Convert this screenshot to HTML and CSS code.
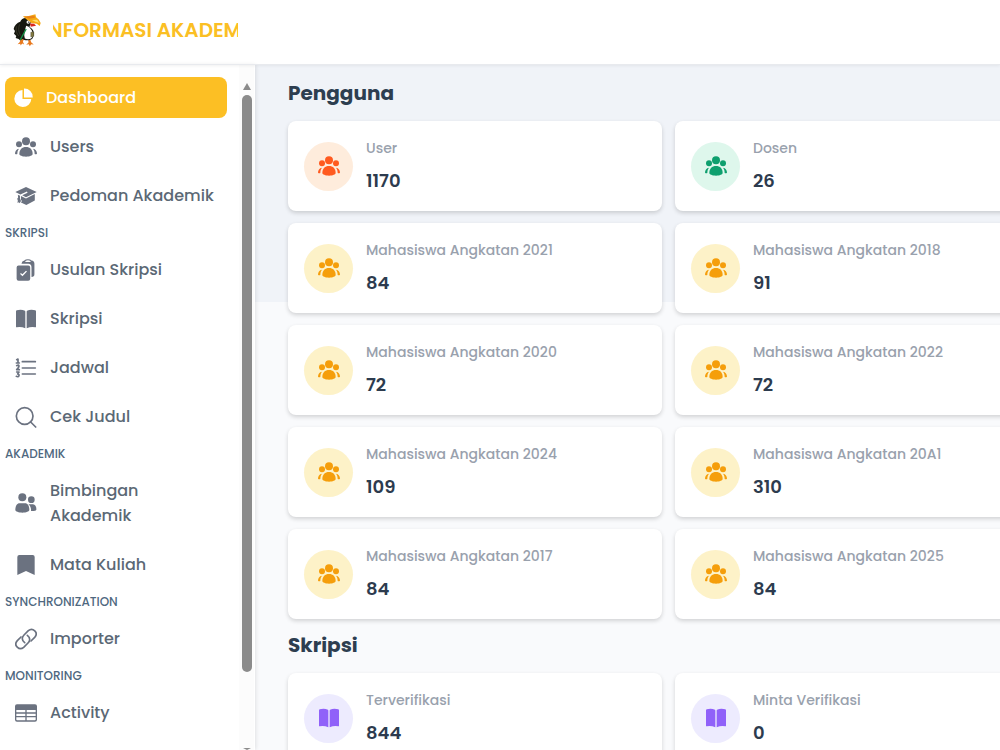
FILE: index.html
```html
<!DOCTYPE html>
<html lang="id">
<head>
    <meta charset="UTF-8">
    <meta name="viewport" content="width=device-width, initial-scale=1.0">
    <title>Informasi Akademik</title>
    <link rel="stylesheet" href="styles.css">
</head>
<body>

    <!-- Shared icons -->
    <svg class="sprite" aria-hidden="true">
        <symbol id="icon-group" viewBox="0 0 66 60">
            <circle cx="33" cy="13" r="12"/>
            <circle cx="12" cy="22" r="9"/>
            <circle cx="54" cy="22" r="9"/>
            <path d="M13 51C13 38 21 30 33 30S53 38 53 51C53 55 44 59 33 59S13 55 13 51Z"/>
            <path d="M0 50C0 42 4 36 12 35C8 40 7 45 7 51C4 52 2 52 0 50Z"/>
            <path d="M66 50C66 42 62 36 54 35C58 40 59 45 59 51C62 52 64 52 66 50Z"/>
        </symbol>
        <symbol id="icon-book" viewBox="0 0 66 60">
            <path d="M3 7Q3 5 5 4Q18 0 30 5Q31 6 31 8V58Q18 52 5 55Q3 55 3 53Z"/>
            <path d="M63 7Q63 5 61 4Q48 0 36 5Q35 6 35 8V58Q48 52 61 55Q63 55 63 53Z"/>
        </symbol>
    </svg>

    <header class="topbar">
        <svg class="logo" viewBox="40 38 88 102" role="img" aria-label="Logo">
            <path fill="#e8781c" d="M64 116L60 126L54 132L62 131L63 136L68 130L74 133L70 125L73 117ZM86 116L87 127L80 134L88 132L91 138L95 132L103 133L95 126L92 116Z"/>
            <path fill="#16170f" d="M62 64C65 54 76 50 86 54L94 66L90 80C104 86 108 104 98 116C90 121 76 122 68 116L62 121L57 116L48 113L50 107L43 100L46 92L42 86C44 76 52 67 62 64Z"/>
            <path fill="#fff" d="M80 76C90 78 100 90 101 104C99 116 88 120 76 115C72 104 75 92 80 76Z"/>
            <path fill="none" stroke="#4b4a37" stroke-width="2" d="M51 78C47 88 51 100 58 107M60 72C55 86 58 99 64 106"/>
            <path fill="none" stroke="#159447" stroke-width="4" d="M80 86L62 119"/>
            <path fill="#847b43" stroke="#333020" stroke-width="1" d="M94 96L103 95L103 108L94 110Z"/>
            <path fill="#f5a914" d="M70 47L82 48L108 41L110 50L118 57L124 68L121 77L112 70L96 68L86 61Z"/>
            <path fill="#e98317" d="M72 48L105 46L107 52L88 55Z"/>
            <path fill="#ffe067" d="M97 59L113 58L120 68L108 64Z"/>
            <path fill="#d92920" d="M91 69L104 70L110 76L94 79Z"/>
            <circle cx="86" cy="65" r="5" fill="#fff"/>
            <circle cx="87" cy="65" r="2" fill="#111"/>
        </svg>
        <div class="brand"><span>INFORMASI AKADEMIK</span></div>
    </header>

    <div class="layout">
        <aside class="sidebar">
            <nav class="menu">
                <a class="menu-item active" href="#">
                    <svg class="icon" viewBox="0 0 66 66"><path d="M28 7V36H57A28 28 0 1 1 28 7Z"/><path d="M33 2A28 28 0 0 1 62 31H33Z"/></svg>
                    <span>Dashboard</span>
                </a>
                <a class="menu-item" href="#">
                    <svg class="icon"><use href="#icon-group"/></svg>
                    <span>Users</span>
                </a>
                <a class="menu-item" href="#">
                    <svg class="icon" viewBox="0 0 70 62">
                        <path d="M35 2L69 18L35 35L23 29L40 21L38 17L17 26L1 18Z"/>
                        <path d="M19 31L35 39L63 25V45L36 60L19 52L22 47L19 43Z"/>
                        <path d="M9 27L16 30V39L19 47L15 54L12 51L8 53L9 45L7 40L10 36Z"/>
                    </svg>
                    <span>Pedoman Akademik</span>
                </a>

                <h2 class="menu-label">SKRIPSI</h2>
                <a class="menu-item" href="#">
                    <svg class="icon" viewBox="0 0 66 68">
                        <path fill-rule="evenodd" d="M10 20H40Q46 20 46 26V61Q46 67 40 67H10Q4 67 4 61V26Q4 20 10 20ZM17 43L15 46L22 53L36 39L33 36L22 47Z"/>
                        <path d="M19 15Q20 6 28 5Q31 1 39 1Q47 1 50 5Q59 6 59 15V47Q59 55 50 56V26Q50 16 40 15ZM31 6V9H47V6Q39 2 31 6Z" fill-rule="evenodd"/>
                    </svg>
                    <span>Usulan Skripsi</span>
                </a>
                <a class="menu-item" href="#">
                    <svg class="icon"><use href="#icon-book"/></svg>
                    <span>Skripsi</span>
                </a>
                <a class="menu-item" href="#">
                    <svg class="icon line" viewBox="0 0 66 66">
                        <path d="M22 14H61M22 33H61M22 51H61"/>
                        <path d="M5 8L9 6V18M4 18H13M5 26Q12 22 12 28Q12 31 5 38H13M5 45H12L8 51Q13 52 12 56Q10 61 4 58"/>
                    </svg>
                    <span>Jadwal</span>
                </a>
                <a class="menu-item" href="#">
                    <svg class="icon line" viewBox="0 0 66 66"><circle cx="29" cy="30" r="25"/><path d="M47 48L62 63"/></svg>
                    <span>Cek Judul</span>
                </a>

                <h2 class="menu-label">AKADEMIK</h2>
                <a class="menu-item" href="#">
                    <svg class="icon" viewBox="0 0 66 60">
                        <circle cx="22" cy="13" r="12"/>
                        <circle cx="49" cy="20" r="10"/>
                        <path d="M1 51C1 39 6 31 14 31H30C38 31 43 39 43 51C43 55 33 59 22 59S1 55 1 51Z"/>
                        <path d="M40 34H54C61 34 65 43 64 50C62 54 55 55 48 54C49 46 46 38 40 34Z"/>
                    </svg>
                    <span>Bimbingan<br>Akademik</span>
                </a>
                <a class="menu-item" href="#">
                    <svg class="icon" viewBox="0 0 66 66"><path d="M7 9Q7 3 13 3H53Q59 3 59 9V63L33 51L7 63Z"/></svg>
                    <span>Mata Kuliah</span>
                </a>

                <h2 class="menu-label">SYNCHRONIZATION</h2>
                <a class="menu-item" href="#">
                    <svg class="icon line" viewBox="0 0 66 66">
                        <path d="M29 44C20 37 20 28 27 21L40 8C53 -3 72 14 59 28L48 39"/>
                        <path d="M37 22C46 29 46 38 39 45L26 58C13 69 -6 52 7 38L18 27"/>
                    </svg>
                    <span>Importer</span>
                </a>

                <h2 class="menu-label">MONITORING</h2>
                <a class="menu-item" href="#">
                    <svg class="icon" viewBox="0 0 66 66">
                        <path fill-rule="evenodd" d="M6 7H60Q66 7 66 13V53Q66 59 60 59H6Q0 59 0 53V13Q0 7 6 7ZM4 24V31H31V24ZM35 24V31H62V24ZM4 35V42H31V35ZM35 35V42H62V35ZM4 46V53L6 55H31V46ZM35 46V55H60L62 53V46Z"/>
                    </svg>
                    <span>Activity</span>
                </a>
            </nav>
            <div class="scrollbar" aria-hidden="true">
                <i class="arrow-up"></i>
                <div class="track"><div class="thumb"></div></div>
                <i class="arrow-down"></i>
            </div>
        </aside>

        <main class="content">
            <h1 class="section-title">Pengguna</h1>
            <div class="cards">
                <div class="card">
                    <div class="badge orange"><svg><use href="#icon-group"/></svg></div>
                    <div><p class="name">User</p><p class="value">1170</p></div>
                </div>
                <div class="card">
                    <div class="badge green"><svg><use href="#icon-group"/></svg></div>
                    <div><p class="name">Dosen</p><p class="value">26</p></div>
                </div>
                <div class="card">
                    <div class="badge yellow"><svg><use href="#icon-group"/></svg></div>
                    <div><p class="name">Mahasiswa Angkatan 2021</p><p class="value">84</p></div>
                </div>
                <div class="card">
                    <div class="badge yellow"><svg><use href="#icon-group"/></svg></div>
                    <div><p class="name">Mahasiswa Angkatan 2018</p><p class="value">91</p></div>
                </div>
                <div class="card">
                    <div class="badge yellow"><svg><use href="#icon-group"/></svg></div>
                    <div><p class="name">Mahasiswa Angkatan 2020</p><p class="value">72</p></div>
                </div>
                <div class="card">
                    <div class="badge yellow"><svg><use href="#icon-group"/></svg></div>
                    <div><p class="name">Mahasiswa Angkatan 2022</p><p class="value">72</p></div>
                </div>
                <div class="card">
                    <div class="badge yellow"><svg><use href="#icon-group"/></svg></div>
                    <div><p class="name">Mahasiswa Angkatan 2024</p><p class="value">109</p></div>
                </div>
                <div class="card">
                    <div class="badge yellow"><svg><use href="#icon-group"/></svg></div>
                    <div><p class="name">Mahasiswa Angkatan 20A1</p><p class="value">310</p></div>
                </div>
                <div class="card">
                    <div class="badge yellow"><svg><use href="#icon-group"/></svg></div>
                    <div><p class="name">Mahasiswa Angkatan 2017</p><p class="value">84</p></div>
                </div>
                <div class="card">
                    <div class="badge yellow"><svg><use href="#icon-group"/></svg></div>
                    <div><p class="name">Mahasiswa Angkatan 2025</p><p class="value">84</p></div>
                </div>
            </div>

            <h1 class="section-title">Skripsi</h1>
            <div class="cards">
                <div class="card">
                    <div class="badge purple"><svg><use href="#icon-book"/></svg></div>
                    <div><p class="name">Terverifikasi</p><p class="value">844</p></div>
                </div>
                <div class="card">
                    <div class="badge purple"><svg><use href="#icon-book"/></svg></div>
                    <div><p class="name">Minta Verifikasi</p><p class="value">0</p></div>
                </div>
            </div>
        </main>
    </div>

</body>
</html>
```
FILE: styles.css
```css
* {
    box-sizing: border-box;
}
body {
    display: flex;
    flex-direction: column;
    height: 100vh;
    margin: 0;
    overflow: hidden;
    font-family: Poppins, Inter, sans-serif;
    font-weight: 500;
    background: #fff;
}
h1, h2, p {
    margin: 0;
}
.sprite {
    display: none;
}
.topbar {
    display: flex;
    align-items: center;
    flex: none;
    gap: 11px;
    height: 65px;
    padding: 0 13px 4px;
    border-bottom: 1px solid #e8eaee;
    box-shadow: 0 1px 3px rgba(0, 0, 0, 0.06);
    z-index: 2;
}
.logo {
    width: 29px;
    height: 34px;
}
.brand {
    display: flex;
    justify-content: center;
    width: 185px;
    padding-left: 12px;
    overflow: hidden;
    white-space: nowrap;
    font-size: 20px;
    font-weight: 600;
    line-height: 30px;
    color: #fbbf24;
}
.layout {
    display: flex;
    flex: 1;
    min-height: 0;
}

/* Sidebar */
.sidebar {
    display: flex;
    flex: none;
    width: 255px;
    padding-right: 1px;
    background: #fff;
    box-shadow: 1px 0 4px rgba(0, 0, 0, 0.1);
    z-index: 1;
}
.menu {
    display: flex;
    flex-direction: column;
    flex: 1;
    gap: 8px;
    padding: 12px 12px 0 5px;
    overflow: hidden;
}
.menu-item {
    display: flex;
    align-items: center;
    flex: none;
    gap: 13px;
    padding: 8px 0 8px 10px;
    border-radius: 8px;
    font-size: 16px;
    line-height: 25px;
    color: #5b6875;
    text-decoration: none;
}
.menu-item.active {
    gap: 12px;
    padding-left: 9px;
    color: #fff;
    background: #fcbf24;
}
.icon {
    flex: none;
    width: 22px;
    height: 22px;
    fill: #6b7280;
}
.active .icon {
    width: 20px;
    fill: #fff;
}
.icon.line {
    fill: none;
    stroke: #6b7280;
    stroke-width: 5;
    stroke-linecap: round;
    stroke-linejoin: round;
}
.menu-label {
    flex: none;
    font-size: 12px;
    font-weight: 500;
    line-height: 17px;
    color: #4f6880;
}
.scrollbar {
    display: flex;
    flex-direction: column;
    align-items: center;
    width: 15px;
    padding-top: 18px;
    background: #fcfcfc;
}
.arrow-up, .arrow-down {
    border: 4px solid transparent;
}
.arrow-up {
    border-top: 0;
    border-bottom: 7px solid #8b8b8b;
}
.arrow-down {
    border-bottom: 0;
    border-top: 2px solid #8b8b8b;
}
.track {
    flex: 1;
    padding-top: 5px;
}
.thumb {
    width: 10px;
    height: calc(100% - 76px);
    border-radius: 5px;
    background: #8b8b8b;
}

/* Content */
.content {
    flex: 1;
    min-width: 0;
    padding: 2px 33px 0;
    overflow: hidden;
    background: linear-gradient(#f0f3f8 237px, #f9fafc 237px);
}
.section-title {
    padding: 11px 0 12px;
    font-size: 20px;
    font-weight: 700;
    line-height: 31px;
    color: #2d3e50;
}
.cards {
    display: grid;
    grid-template-columns: repeat(2, minmax(374px, 1fr));
    gap: 12px 13px;
}
.card {
    display: flex;
    align-items: center;
    gap: 13px;
    height: 90px;
    padding: 0 16px;
    border-radius: 8px;
    background: #fff;
    box-shadow: 0 2px 4px rgba(0, 0, 0, 0.16);
}
.badge {
    display: flex;
    align-items: center;
    justify-content: center;
    width: 49px;
    height: 49px;
    border-radius: 50%;
}
.badge svg {
    width: 22px;
    height: 20px;
    fill: currentColor;
}
.orange {
    color: #ff5a1f;
    background: #feecdc;
}
.green {
    color: #0e9f6e;
    background: #def7ec;
}
.yellow {
    color: #f59e0b;
    background: #fdf2c8;
}
.purple {
    color: #9061f9;
    background: #edebfe;
}
.name {
    margin-bottom: 8px;
    font-size: 14px;
    line-height: 22px;
    color: #99a1ad;
}
.value {
    font-size: 18px;
    font-weight: 600;
    line-height: 28px;
    color: #2d3b4e;
}
```
